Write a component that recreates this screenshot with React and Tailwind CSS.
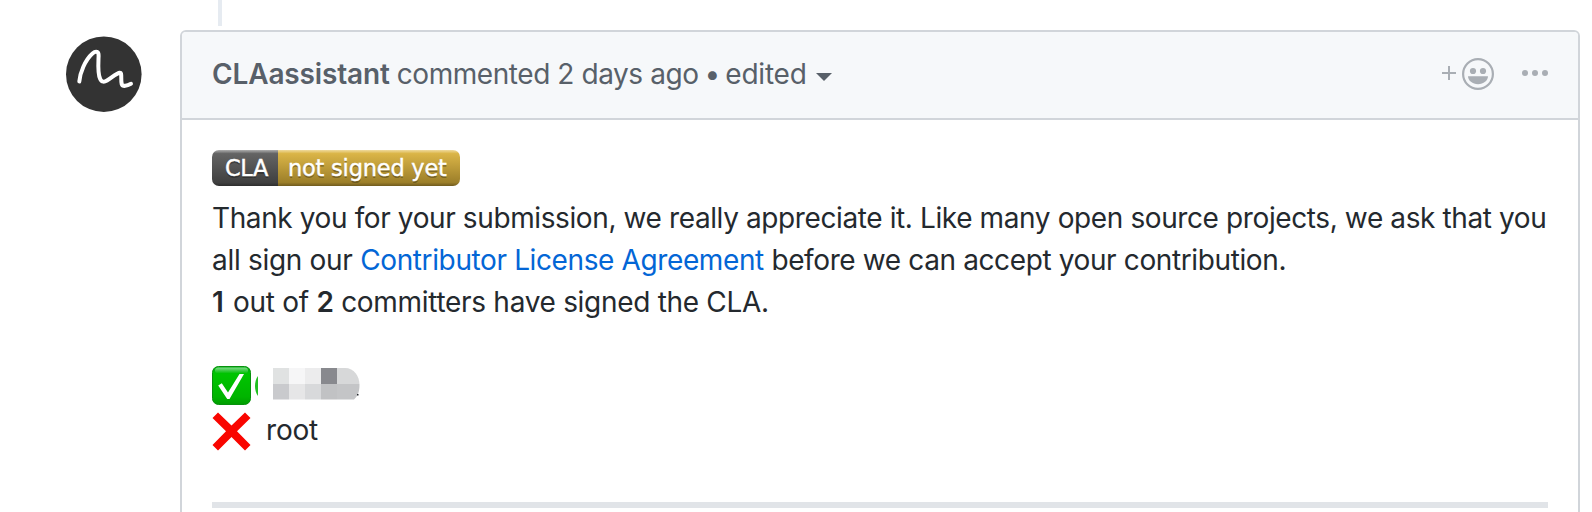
function Avatar() {
  return (
    <svg className="block h-[77px] w-[76px]" viewBox="0 0 76 77">
      <circle cx="37.8" cy="38.2" r="37.8" fill="#333" />
      <path
        d="M13.300 45.500C14 37 19 24 26.500 17.500C30 14.500 32.800 15.500 32.600 20C32.300 28 31.500 38 34.200 43C35.700 46.500 38.500 46 41 44.500C46 41.500 50 37.500 53.500 36.700C56.500 36 54.500 43 55.700 48C56.700 51 61 50 65 47.800"
        fill="none"
        stroke="#fff"
        strokeWidth="4"
        strokeLinecap="round"
        strokeLinejoin="round"
      />
    </svg>
  );
}

function Smiley() {
  return (
    <svg className="block h-8 w-8" viewBox="0 0 32 32" fill="#a9aeb4">
      <circle cx="16" cy="16" r="14.9" fill="none" stroke="#a9aeb4" strokeWidth="2.200" />
      <circle cx="11" cy="13" r="3.100" />
      <circle cx="21" cy="13" r="3.100" />
      <path d="M6 18.200H26C26 22.500 21.500 26.200 16 26.200S6 22.500 6 18.200Z" />
    </svg>
  );
}

function CheckMark() {
  return (
    <svg className="block h-[39px] w-[39px]" viewBox="0 0 39 39">
      <defs>
        <linearGradient id="green" x1="0" y1="0" x2="0" y2="1">
          <stop offset="0" stopColor="#00b014" />
          <stop offset="0.2" stopColor="#00c400" />
          <stop offset="0.8" stopColor="#00b400" />
          <stop offset="1" stopColor="#009c00" />
        </linearGradient>
        <linearGradient id="shine" x1="0" y1="0" x2="0" y2="1">
          <stop offset="0" stopColor="#fff" stopOpacity="0.5" />
          <stop offset="1" stopColor="#fff" stopOpacity="0" />
        </linearGradient>
      </defs>
      <rect x="0.500" y="0.500" width="38" height="38" rx="6" fill="url(#green)" stroke="#07910c" />
      <rect x="3" y="1.500" width="33" height="6" rx="3" fill="url(#shine)" />
      <path d="M6.200 19.500L9.800 17.200L16 26.500L27.500 8H32L17.500 33H15.200Z" fill="#fff" />
    </svg>
  );
}

function CrossMark() {
  return (
    <svg className="block h-[39px] w-[39px]" viewBox="0 0 39 39">
      <path
        d="M6 0.500L19.500 13.500L33 0.500L38.500 6L25 19.300L38.500 33L33 38.500L19.500 25L6 38.500L0.500 33L14 19.300L0.500 6Z"
        fill="#f90500"
      />
    </svg>
  );
}

function MaskedName() {
  return (
    <svg className="block h-8 w-[88px]" viewBox="0 0 88 32">
      <defs>
        <clipPath id="pill">
          <path d="M0 0H72C81 0 86.500 8 86.500 17C86.500 23 85 28 81 31.500H0Z" />
        </clipPath>
      </defs>
      <g clipPath="url(#pill)" shapeRendering="crispEdges">
        <rect x="0" y="0" width="16" height="16" fill="#e0e2e2" />
        <rect x="16" y="0" width="16" height="16" fill="#f6f6f7" />
        <rect x="32" y="0" width="16" height="16" fill="#ececed" />
        <rect x="48" y="0" width="16" height="16" fill="#88898e" />
        <rect x="64" y="0" width="24" height="16" fill="#d7d8d9" />
        <rect x="0" y="16" width="16" height="16" fill="#c9cacd" />
        <rect x="16" y="16" width="16" height="16" fill="#e6e6e7" />
        <rect x="32" y="16" width="16" height="16" fill="#d8d9db" />
        <rect x="48" y="16" width="16" height="16" fill="#c1c2c4" />
        <rect x="64" y="16" width="24" height="16" fill="#c4c5c7" />
      </g>
      <rect x="84" y="26" width="1.500" height="1.500" fill="#24292e" />
    </svg>
  );
}

function Badge() {
  return (
    <div className="flex h-9 w-[248px] overflow-hidden whitespace-nowrap rounded-[7px] bg-[linear-gradient(to_bottom,rgba(255,255,255,0.5)_0%,rgba(170,170,170,0.1)_10%,rgba(0,0,0,0.3)_90%,rgba(0,0,0,0.5)_100%),linear-gradient(to_right,#5c5c5c_66px,#e0b63c_66px)] font-['DejaVu_Sans',sans-serif] text-[22.5px] leading-[36px] text-white [-webkit-text-stroke:0.4px_white] [text-shadow:0_2px_0_rgba(1,1,1,0.3)]">
      <span className="w-[66px] pl-[13px] tracking-[-0.4px]">CLA</span>
      <span className="pl-[10px] tracking-[-0.22px]">not signed yet</span>
    </div>
  );
}

export default function App() {
  return (
    <div className="flex h-[512px] w-[1592px] overflow-hidden bg-white font-['Inter',sans-serif] text-[28px] leading-[42px] text-[#24292e]">
      <div className="w-[180px] shrink-0 pl-[66px] pt-9">
        <Avatar />
      </div>
      <div className="flex w-[1400px] shrink-0 flex-col">
        <div className="ml-[38px] h-[26px] w-1 shrink-0 bg-[#e6ebf1]" />
        <div className="mt-1 h-[520px] shrink-0 rounded-t-md border-2 border-[#d1d5da]">
          <div className="flex h-[88px] items-center justify-between rounded-t border-b-2 border-[#d1d5da] bg-[#f6f8fa] pb-[2px] pl-[30px] pr-[30px] text-[#586069]">
            <div className="flex items-center whitespace-nowrap">
              <span className="font-semibold tracking-[-0.15px]">CLAassistant</span>
              <span className="ml-[7px] tracking-[-0.43px]">commented 2 days ago</span>
              <span className="ml-[6px]">•</span>
              <span className="ml-[5px] tracking-[-0.2px]">edited</span>
              <svg className="ml-[9px] mt-[5px] h-2 w-4" viewBox="0 0 16 8" fill="#586069"><path d="M0 0H16L8 8Z" /></svg>
            </div>
            <div className="flex items-center">
              <svg className="mb-[2px] h-[14px] w-[14px]" viewBox="0 0 14 14" fill="#a9aeb4"><path d="M6 0H8V6H14V8H8V14H6V8H0V6H6Z" /></svg>
              <div className="ml-[6px]"><Smiley /></div>
              <svg className="mb-[2px] ml-7 h-[6px] w-[26px]" viewBox="0 0 26 6" fill="#a9aeb4"><circle cx="3" cy="3" r="3" /><circle cx="13" cy="3" r="3" /><circle cx="23" cy="3" r="3" /></svg>
            </div>
          </div>
          <div className="pl-[30px] pr-[30px] pt-[30px]">
            <Badge />
            <div className="mt-[11px] whitespace-nowrap">
              <p className="tracking-[-0.39px]">Thank you for your submission, we really appreciate it. Like many open source projects, we ask that you</p>
              <p className="tracking-[-0.38px]">
                <span className="tracking-[-0.3px]">all sign our </span>
                <a className="tracking-[-0.38px] text-[#0366d6]">Contributor License Agreement</a>
                <span> before we can accept your contribution.</span>
              </p>
              <p className="tracking-[-0.3px]">
                <b className="mr-[2px] font-semibold">1</b> out of <b className="font-semibold">2</b> committers have signed the CLA.
              </p>
            </div>
            <div className="mt-[43px] flex h-[39px] items-start">
              <CheckMark />
              <svg className="ml-1 mt-[10px] h-5 w-[3px]" viewBox="0 0 3 20"><path d="M3 0C-1 5 -1 15 3 20Z" fill="#20c020" /></svg>
              <div className="ml-[15px] mt-[2px]"><MaskedName /></div>
            </div>
            <div className="mt-[7px] flex h-[39px] items-center">
              <CrossMark />
              <span className="mb-[3px] ml-[15px] tracking-[-0.2px]">root</span>
            </div>
            <div className="mt-[51px] h-[6px] bg-[#e1e4e8]" />
          </div>
        </div>
      </div>
    </div>
  );
}
